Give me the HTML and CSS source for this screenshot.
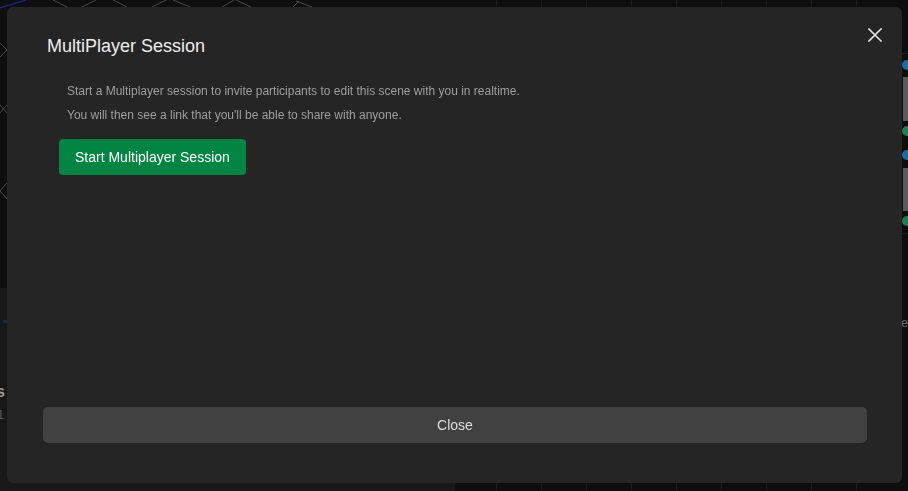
FILE: index.html
```html
<!DOCTYPE html>
<html lang="en">
<head>
<meta charset="utf-8">
<title>MultiPlayer Session</title>
<link rel="stylesheet" href="styles.css">
</head>
<body>
<div class="app">
  <svg class="canvas" width="908" height="491" viewBox="0 0 908 491" xmlns="http://www.w3.org/2000/svg">
    <rect x="0" y="0" width="908" height="491" fill="#0e0e0e"/>
    <rect x="0" y="288" width="455" height="203" fill="#181818"/>
    <g stroke="#1c1c1c" stroke-width="1">
      <line x1="496.5" y1="0" x2="496.5" y2="491"/>
      <line x1="541.5" y1="0" x2="541.5" y2="491"/>
      <line x1="586.5" y1="0" x2="586.5" y2="491"/>
      <line x1="631.5" y1="0" x2="631.5" y2="491"/>
      <line x1="676.5" y1="0" x2="676.5" y2="491"/>
      <line x1="721.5" y1="0" x2="721.5" y2="491"/>
      <line x1="766.5" y1="0" x2="766.5" y2="491"/>
      <line x1="811.5" y1="0" x2="811.5" y2="491"/>
      <line x1="856.5" y1="0" x2="856.5" y2="491"/>
      <line x1="455" y1="53.5" x2="908" y2="53.5"/>
      <line x1="455" y1="233.5" x2="908" y2="233.5"/>
    </g>
    <g stroke="#4a4a4a" stroke-width="1" fill="none">
      <line x1="53" y1="0" x2="67" y2="7"/>
      <line x1="82" y1="7" x2="96" y2="0"/>
      <line x1="113" y1="0" x2="127" y2="7"/>
      <line x1="152" y1="7" x2="166" y2="0"/>
      <line x1="173" y1="0" x2="190" y2="7"/>
      <line x1="222" y1="7" x2="234" y2="0"/>
      <line x1="236" y1="0" x2="251" y2="7"/>
      <line x1="293" y1="7" x2="299" y2="1"/>
      <line x1="296" y1="1" x2="312" y2="7"/>
      <polyline points="0,43 7,50 0,57"/>
      <line x1="0" y1="105" x2="7" y2="113"/>
      <line x1="0" y1="113" x2="7" y2="105"/>
      <polyline points="7,183 0,191 7,199"/>
    </g>
    <line x1="0" y1="8" x2="26" y2="0" stroke="#1a2a8a" stroke-width="1.2"/>
    <rect x="3" y="320" width="4" height="3" fill="#1c2a3a"/>
    <g fill="#1a6fa0">
      <circle cx="907" cy="65" r="5"/>
      <circle cx="907" cy="155" r="5"/>
    </g>
    <g fill="#1a8050">
      <circle cx="907" cy="131" r="5"/>
      <circle cx="907" cy="221" r="5"/>
    </g>
    <rect x="903" y="77" width="5" height="44" fill="#5a5a5a"/>
    <rect x="903" y="168" width="5" height="43" fill="#5a5a5a"/>
    <text x="901" y="327" class="cv-text">e</text>
    <text x="-4" y="397" class="cv-bold">s</text>
    <text x="-3" y="419" class="cv-faint">1 (</text>
  </svg>
</div>

<div class="overlay">
  <div class="modal" role="dialog">
    <div class="modal-header">
      <h2 class="modal-title">MultiPlayer Session</h2>
      <button class="icon-close" aria-label="Close">
        <svg width="14" height="14" viewBox="0 0 14 14" xmlns="http://www.w3.org/2000/svg">
          <path d="M1 1 L13 13 M13 1 L1 13" stroke="#e4e4e4" stroke-width="1.6" stroke-linecap="square" fill="none"/>
        </svg>
      </button>
    </div>
    <div class="modal-body">
      <p class="desc">Start a Multiplayer session to invite participants to edit this scene with you in realtime.</p>
      <p class="desc">You will then see a link that you'll be able to share with anyone.</p>
      <button class="btn-start">Start Multiplayer Session</button>
    </div>
    <div class="modal-footer">
      <button class="btn-close">Close</button>
    </div>
  </div>
</div>
</body>
</html>
```

FILE: styles.css
```css
* {
  box-sizing: border-box;
}

html, body {
  margin: 0;
  padding: 0;
  width: 908px;
  height: 491px;
  overflow: hidden;
  background: #0e0e0e;
  font-family: "Liberation Sans", Arial, sans-serif;
}

.app {
  width: 908px;
  height: 491px;
}

.canvas {
  display: block;
}

.cv-text {
  font-family: "Liberation Sans", Arial, sans-serif;
  font-size: 13px;
  fill: #6a6a6a;
}

.cv-bold {
  font-family: "Liberation Sans", Arial, sans-serif;
  font-size: 16px;
  font-weight: bold;
  fill: #9a9a9a;
}

.cv-faint {
  font-family: "Liberation Sans", Arial, sans-serif;
  font-size: 13px;
  fill: #5a5a5a;
}

.overlay {
  position: fixed;
  inset: 0;
  padding: 7px 6px 8px 7px;
  display: flex;
}

.modal {
  flex: 1;
  display: flex;
  flex-direction: column;
  background: #252525;
  border-radius: 6px;
}

.modal-header {
  display: flex;
  align-items: flex-start;
  padding: 21px 20px 0 40px;
}

.modal-title {
  flex: 1;
  margin: 6px 0 0 0;
  font-size: 18px;
  line-height: 24px;
  font-weight: normal;
  color: #ededed;
}

.icon-close {
  width: 14px;
  height: 14px;
  padding: 0;
  margin: 0;
  border: none;
  background: none;
  display: flex;
  cursor: pointer;
}

.modal-body {
  flex: 1;
  padding: 21px 0 0 52px;
}

.desc {
  margin: 0 0 0 8px;
  font-size: 12px;
  line-height: 24px;
  color: #9e9e9e;
}

.btn-start {
  margin-top: 12px;
  height: 36px;
  padding: 0 16px;
  border: none;
  border-radius: 4px;
  background: #028542;
  color: #ffffff;
  font-family: "Liberation Sans", Arial, sans-serif;
  font-size: 14px;
  cursor: pointer;
}

.modal-footer {
  display: flex;
  padding: 0 35px 40px 36px;
}

.btn-close {
  flex: 1;
  height: 36px;
  border: none;
  border-radius: 5px;
  background: #414141;
  color: #dedede;
  font-family: "Liberation Sans", Arial, sans-serif;
  font-size: 14px;
  cursor: pointer;
}
```
